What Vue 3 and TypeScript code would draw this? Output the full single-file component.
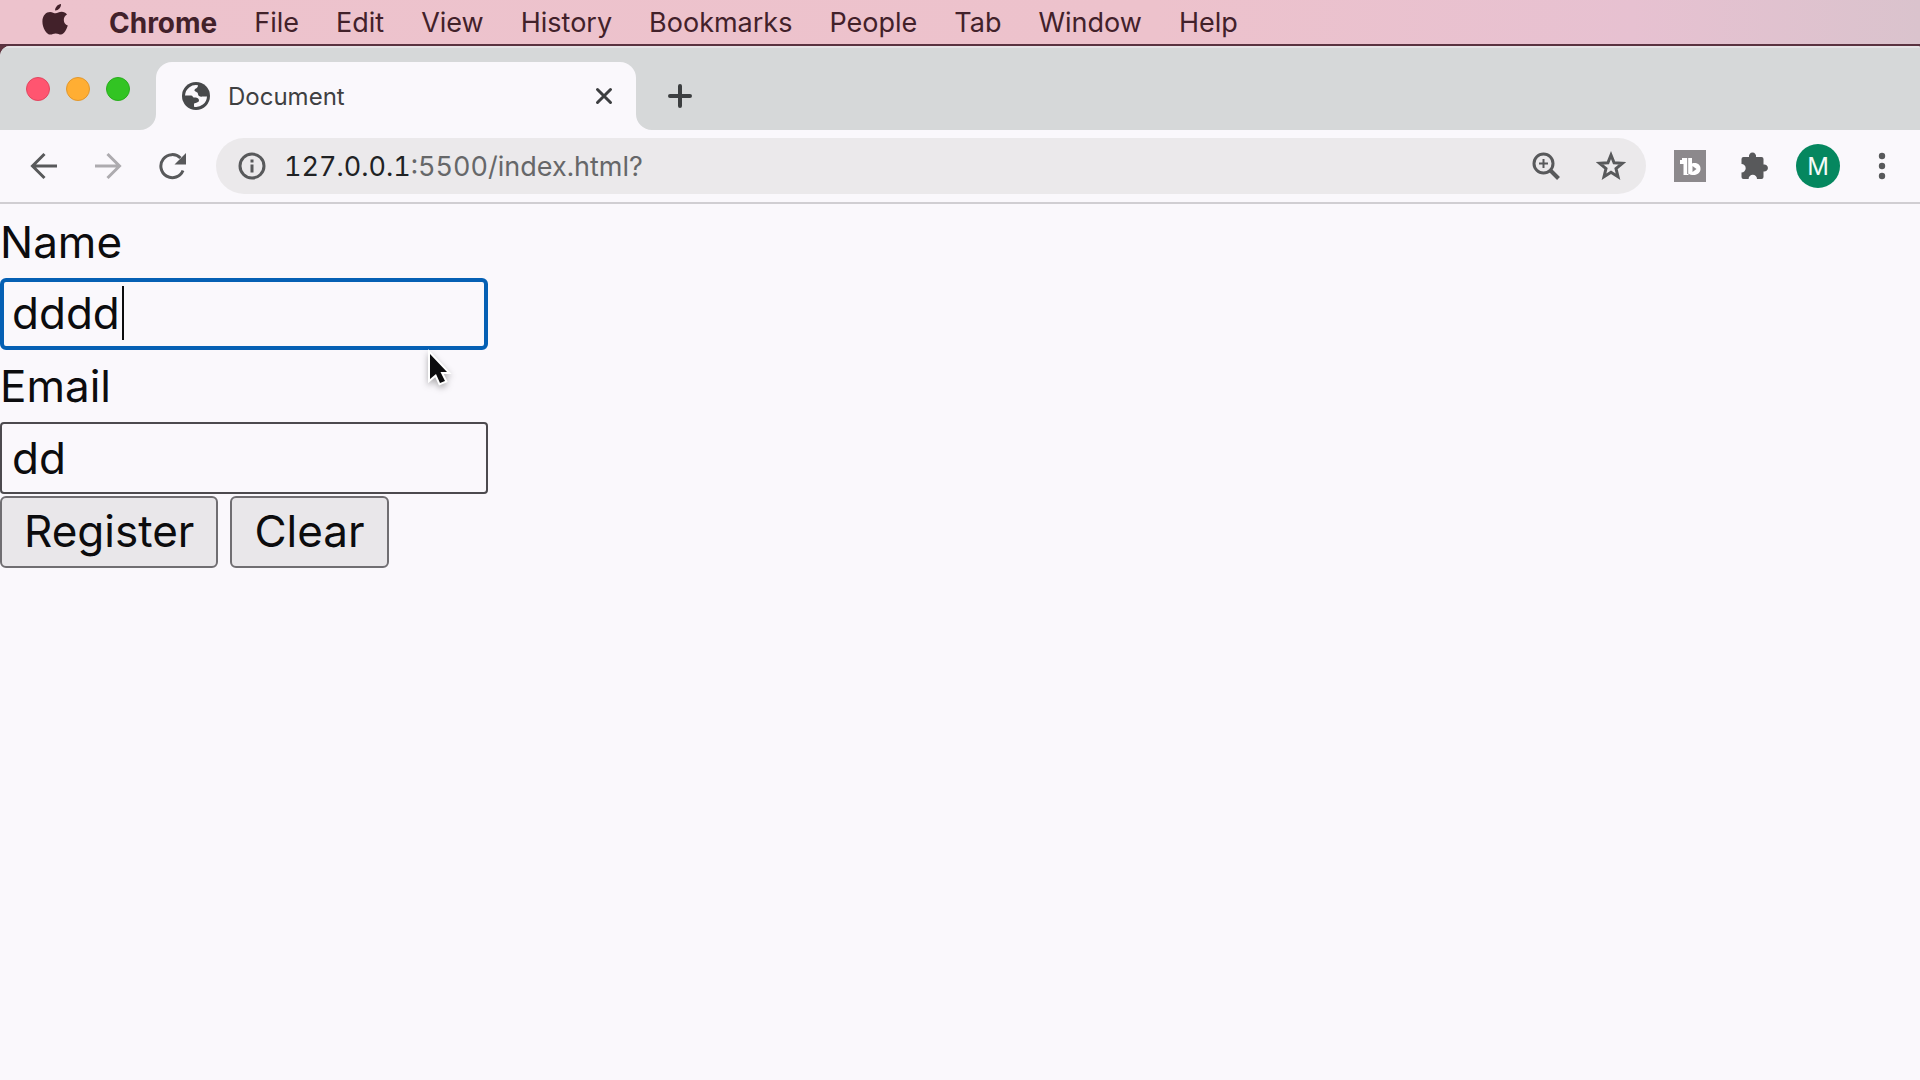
<script setup lang="ts">
import { ref } from 'vue'

const menus: string[] = ['File', 'Edit', 'View', 'History', 'Bookmarks', 'People', 'Tab', 'Window', 'Help']
const name = ref('dddd')
const email = ref('dd')

function clear(): void {
  name.value = ''
  email.value = ''
}
</script>

<template>
  <div class="desktop">
    <nav class="menubar" aria-label="Menu bar">
      <button class="menu apple" aria-label="Apple menu">
        <svg width="26" height="32" viewBox="0 0 26 32" fill="currentColor">
          <path d="M19 0c.2 3.500-2.800 6.700-5.900 6.500C12.800 3.400 15.800.3 19 0z" />
          <path d="M25 10.600c-2 1.200-3.200 3-3.200 5.300 0 2.700 1.600 4.800 4 5.700-1 3.400-3.600 9-6.900 9-1.900 0-2.700-1.200-5.200-1.200s-3.400 1.200-5.200 1.200C4.500 30.600.4 24 .4 17.400c0-6.200 3.900-9.500 7.700-9.500 2.300 0 3.900 1.400 5.600 1.400 1.600 0 3.300-1.500 6-1.500 2.100 0 4 1 5.300 2.800z" />
        </svg>
      </button>
      <button class="menu app">Chrome</button>
      <button v-for="m in menus" :key="m" class="menu">{{ m }}</button>
    </nav>

    <div class="window">
      <header class="tabstrip">
        <div class="lights">
          <button class="light red" aria-label="Close window"></button>
          <button class="light yellow" aria-label="Minimise window"></button>
          <button class="light green" aria-label="Zoom window"></button>
        </div>
        <div class="tab">
          <svg class="flare left" width="16" height="16" viewBox="0 0 16 16"><path d="M16 0v16H0A16 16 0 0 0 16 0z" fill="#faf8fc" /></svg>
          <svg class="globe" width="28" height="28" viewBox="0 0 28 28">
            <circle cx="14" cy="14" r="14" fill="#47494b" />
            <path d="M16 3.200C16 6.500 13 6 12.500 8c-.5 2 3.500 1.500 3.500 4s3 3 4 2.500h5A11 11 0 0 1 12 24.800V22c0-1.500 5-1 5-3.500s-2.500-3-5-3c-1.500 0-1-2-3-2H3A11 11 0 0 1 16 3.200z" fill="#faf8fc" />
          </svg>
          <span class="title">Document</span>
          <button class="icon close" aria-label="Close tab">
            <svg width="18" height="18" viewBox="0 0 18 18"><path d="M2.500 2.500l13 13M15.500 2.500l-13 13" stroke="currentColor" stroke-width="3" stroke-linecap="round" /></svg>
          </button>
          <svg class="flare right" width="16" height="16" viewBox="0 0 16 16"><path d="M0 0v16h16A16 16 0 0 1 0 0z" fill="#faf8fc" /></svg>
        </div>
        <button class="icon plus" aria-label="New tab">
          <svg width="24" height="24" viewBox="0 0 24 24"><path d="M12 2v20M2 12h20" stroke="currentColor" stroke-width="4" stroke-linecap="round" /></svg>
        </button>
      </header>

      <div class="toolbar">
        <div class="history">
          <button class="icon" aria-label="Back">
            <svg width="28" height="28" viewBox="0 0 28 28" fill="none" stroke="currentColor" stroke-width="3"><path d="M27 14H3M14.500 2L2.500 14l12 12" /></svg>
          </button>
          <button class="icon faded" aria-label="Forward">
            <svg width="28" height="28" viewBox="0 0 28 28" fill="none" stroke="currentColor" stroke-width="3"><path d="M1 14h24M13.500 2l12 12-12 12" /></svg>
          </button>
          <button class="icon" aria-label="Reload">
            <svg width="28" height="28" viewBox="0 0 28 28"><path d="M25 18.500A11.500 11.500 0 1 1 22.500 6" fill="none" stroke="currentColor" stroke-width="3" /><path d="M28 1v11.500H16.500z" fill="currentColor" /></svg>
          </button>
        </div>
        <div class="omnibox">
          <button class="icon" aria-label="Site information">
            <svg width="28" height="28" viewBox="0 0 28 28"><circle cx="14" cy="14" r="12" fill="none" stroke="currentColor" stroke-width="3" /><path d="M12.500 7.500h3v3h-3zM12.500 12.500h3v8h-3z" fill="currentColor" /></svg>
          </button>
          <a class="url" href="#"><span class="host">127.0.0.1</span>:5500/index.html?</a>
          <button class="icon" aria-label="Page zoom">
            <svg width="28" height="28" viewBox="0 0 28 28" fill="none" stroke="currentColor"><circle cx="11.500" cy="11.500" r="9.500" stroke-width="3" /><path d="M18 18l8.500 8.500" stroke-width="4" /><path d="M11.500 7v9M7 11.500h9" stroke-width="2" /></svg>
          </button>
          <button class="icon" aria-label="Bookmark this page">
            <svg width="30" height="30" viewBox="0 0 30 30" fill="none" stroke="currentColor" stroke-width="3"><path d="M15 4l3.100 7.700 8.200.6-6.300 5.300 2 8.100-7-4.400-7 4.400 2-8.100-6.300-5.300 8.200-.6z" /></svg>
          </button>
        </div>
        <div class="actions">
          <button class="icon" aria-label="TubeBuddy">
            <svg width="32" height="32" viewBox="0 0 32 32"><path d="M0 0h32v32H0z" fill="#8c898c" /><path d="M8 8h10v5.500c5-1.500 9 1.500 8.500 6-.5 4-4 5.500-7 5.500-2 0-4-.5-5-1.500v1.500H9.500V14H6v-4h2z" fill="#fff" /><path d="M13.700 8v16" stroke="#8c898c" stroke-width="1" /><path d="M18.500 16l4 3-4 3z" fill="#8c898c" /></svg>
          </button>
          <button class="icon" aria-label="Extensions">
            <svg width="30" height="30" viewBox="0 0 30 30"><path d="M3.500 6H9a3.600 3.600 0 1 1 7 0h5.500a2 2 0 0 1 2 2v5.500a3.600 3.600 0 1 1 0 7V26a2 2 0 0 1-2 2H17a4.200 4.200 0 0 0-8.400 0H3.500a2 2 0 0 1-2-2v-4.600a4.200 4.200 0 0 0 0-8.400V8a2 2 0 0 1 2-2z" fill="currentColor" /></svg>
          </button>
          <button class="avatar" aria-label="Profile">M</button>
          <button class="icon" aria-label="More">
            <svg width="8" height="28" viewBox="0 0 8 28" fill="currentColor"><circle cx="4" cy="4" r="3.200" /><circle cx="4" cy="14" r="3.200" /><circle cx="4" cy="24" r="3.200" /></svg>
          </button>
        </div>
      </div>

      <main class="page">
        <form @submit.prevent>
          <label for="name">Name</label>
          <div class="field">
            <input id="name" v-model="name" class="active" type="text" autocomplete="off" />
            <span class="caret"></span>
            <svg class="pointer" width="32" height="42" viewBox="0 0 32 42"><path d="M5 6v25l6-5 4 9 5-2-4.500-9H22z" fill="#0c0c0e" stroke="#fff" stroke-width="4" paint-order="stroke" /></svg>
          </div>
          <label for="email">Email</label>
          <div class="field">
            <input id="email" v-model="email" type="text" autocomplete="off" />
          </div>
          <div class="buttons">
            <button class="push" type="submit">Register</button>
            <button class="push" type="button" @click="clear">Clear</button>
          </div>
        </form>
      </main>
    </div>
  </div>
</template>

<style>
body {
  margin: 0;
  background: #faf8fc;
}
</style>

<style scoped>
.desktop {
  min-height: 100vh;
  display: flex;
  flex-direction: column;
  background: #5f3540;
  font-family: Inter, "Liberation Sans", sans-serif;
}
.desktop * {
  box-sizing: border-box;
}
button {
  margin: 0;
  padding: 0;
  border: 0;
  background: none;
  color: inherit;
  font: inherit;
}
svg {
  display: block;
  flex: none;
}
.menubar {
  display: flex;
  align-items: center;
  gap: 37px;
  height: 46px;
  padding: 2px 0 0 42px;
  background: linear-gradient(90deg, #edc3cd 0%, #edc2cc 60%, #e7c1d1 85%, #dac3cd 100%);
  border-bottom: 2px solid #5a3240;
  color: #42212a;
  font-size: 27px;
  line-height: 42px;
}
.menu.app {
  font-size: 28px;
  font-weight: 700;
}
.apple {
  margin-bottom: 6px;
  margin-right: 4px;
}
.window {
  flex: 1;
  display: flex;
  flex-direction: column;
  border-radius: 10px 2px 0 0;
  background: #faf8fc;
  overflow: hidden;
}
.tabstrip {
  display: flex;
  align-items: flex-end;
  height: 84px;
  background: #d6d8d9;
  border-top: 2px solid #e6e3e6;
}
.lights {
  display: flex;
  gap: 16px;
  width: 156px;
  padding: 0 0 29px 26px;
}
.light {
  width: 24px;
  height: 24px;
  border-radius: 50%;
}
.red {
  background: #ff5570;
  border: 1px solid #e2465f;
}
.yellow {
  background: #ffae33;
  border: 1px solid #e2972c;
}
.green {
  background: #32c423;
  border: 1px solid #29ad1d;
}
.tab {
  position: relative;
  display: flex;
  align-items: center;
  width: 480px;
  height: 68px;
  padding: 0 23px 0 26px;
  border-radius: 16px 16px 0 0;
  background: #faf8fc;
}
.flare {
  position: absolute;
  bottom: 0;
}
.flare.left {
  left: -16px;
}
.flare.right {
  right: -16px;
}
.title {
  flex: 1;
  padding-left: 18px;
  color: #3f4042;
  font-size: 24px;
}
.close,
.plus {
  color: #3c3e40;
}
.plus {
  height: 68px;
  padding-left: 32px;
}
.icon {
  display: flex;
  align-items: center;
  justify-content: center;
  flex: none;
}
.toolbar {
  display: flex;
  align-items: center;
  height: 74px;
  border-bottom: 2px solid #d0ced2;
  color: #58595b;
}
.history {
  display: flex;
  gap: 36px;
  width: 216px;
  padding-left: 30px;
}
.faded {
  color: #adabaf;
}
.omnibox {
  flex: 1;
  display: flex;
  align-items: center;
  gap: 36px;
  height: 56px;
  padding: 0 20px 0 22px;
  border-radius: 28px;
  background: #ebe9eb;
}
.url {
  flex: 1;
  margin-left: -18px;
  color: #666769;
  font-size: 27px;
  font-variant-numeric: tabular-nums;
  text-decoration: none;
}
.host {
  color: #202224;
}
.actions {
  display: flex;
  align-items: center;
  gap: 34px;
  width: 274px;
  padding-left: 28px;
}
.avatar {
  width: 44px;
  height: 44px;
  margin: 0 4px 0 -8px;
  border-radius: 50%;
  background: #05875f;
  color: #f4fbf8;
  font-size: 24px;
}
.page {
  padding-top: 2px;
  color: #0c0c0e;
  font-size: 44px;
}
label {
  display: block;
  width: max-content;
  line-height: 72px;
}
.field {
  position: relative;
  width: 488px;
  height: 72px;
}
input {
  display: block;
  width: 100%;
  height: 72px;
  padding: 0 10px;
  border: 2px solid #4c4a4e;
  border-radius: 4px;
  outline: 0;
  background: #faf8fc;
  color: inherit;
  font: inherit;
}
input.active {
  padding: 0 8px 2px;
  border: 4px solid #0560b4;
  border-radius: 6px;
}
.caret {
  position: absolute;
  top: 8px;
  left: 122px;
  width: 2px;
  height: 54px;
  background: #0c0c0e;
}
.pointer {
  position: absolute;
  top: 70px;
  left: 425px;
  filter: drop-shadow(0 3px 3px rgba(0, 0, 0, 0.3));
}
.buttons {
  display: flex;
  gap: 12px;
  padding-top: 2px;
}
.push {
  height: 72px;
  padding: 0 22px 2px;
  border: 2px solid #706e72;
  border-radius: 6px;
  background: #e9e7ea;
}
</style>
